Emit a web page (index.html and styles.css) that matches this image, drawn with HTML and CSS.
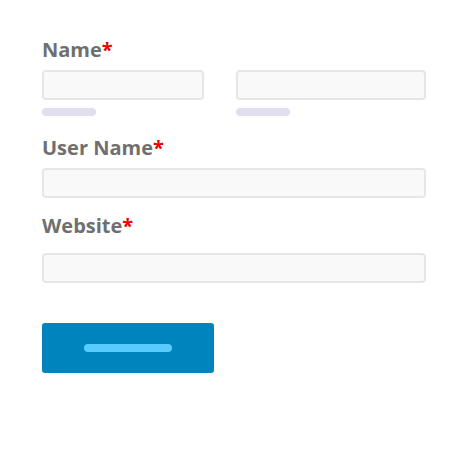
FILE: index.html
```html
<!DOCTYPE html>
<html>
<head>
<meta charset="utf-8">
<link rel="stylesheet" href="styles.css">
</head>
<body>
<form class="form">
  <div class="field">
    <label class="label">Name<span class="req">*</span></label>
    <div class="name-row">
      <div class="name-col">
        <div class="input"></div>
        <div class="hint"></div>
      </div>
      <div class="name-col">
        <div class="input"></div>
        <div class="hint"></div>
      </div>
    </div>
  </div>
  <div class="field field-user">
    <label class="label">User Name<span class="req">*</span></label>
    <div class="input"></div>
  </div>
  <div class="field field-web">
    <label class="label">Website<span class="req">*</span></label>
    <div class="input"></div>
  </div>
  <div class="button"><span class="button-bar"></span></div>
</form>
</body>
</html>
```
FILE: styles.css
```css
html, body {
  margin: 0;
  padding: 0;
  background: #ffffff;
}
.form {
  width: 384px;
  padding: 38px 0 0 42px;
  display: flex;
  flex-direction: column;
  font-family: "Open Sans", "Liberation Sans", sans-serif;
}
.label {
  display: block;
  font-size: 20px;
  line-height: 24px;
  font-weight: 700;
  color: #6f6f6f;
  margin-bottom: 8px;
}
.req {
  color: #f00000;
}
.name-row {
  display: flex;
  gap: 32px;
}
.name-col {
  display: flex;
  flex-direction: column;
  gap: 8px;
}
.name-col:first-child {
  width: 162px;
}
.name-col:last-child {
  flex: 1;
}
.input {
  box-sizing: border-box;
  height: 30px;
  border: 2px solid #e3e7e5;
  background: #f9f9f9;
  border-radius: 4px;
}
.hint {
  width: 54px;
  height: 8px;
  border-radius: 4px;
  background: #dfdfef;
}
.field-user {
  margin-top: 20px;
}
.field-web {
  margin-top: 16px;
}
.field-web .label {
  margin-bottom: 15px;
}
.button {
  margin-top: 40px;
  width: 172px;
  height: 50px;
  border-radius: 3px;
  background: #0084bd;
  display: flex;
  align-items: center;
  justify-content: center;
}
.button-bar {
  width: 88px;
  height: 8px;
  border-radius: 4px;
  background: #58cbff;
}
```
